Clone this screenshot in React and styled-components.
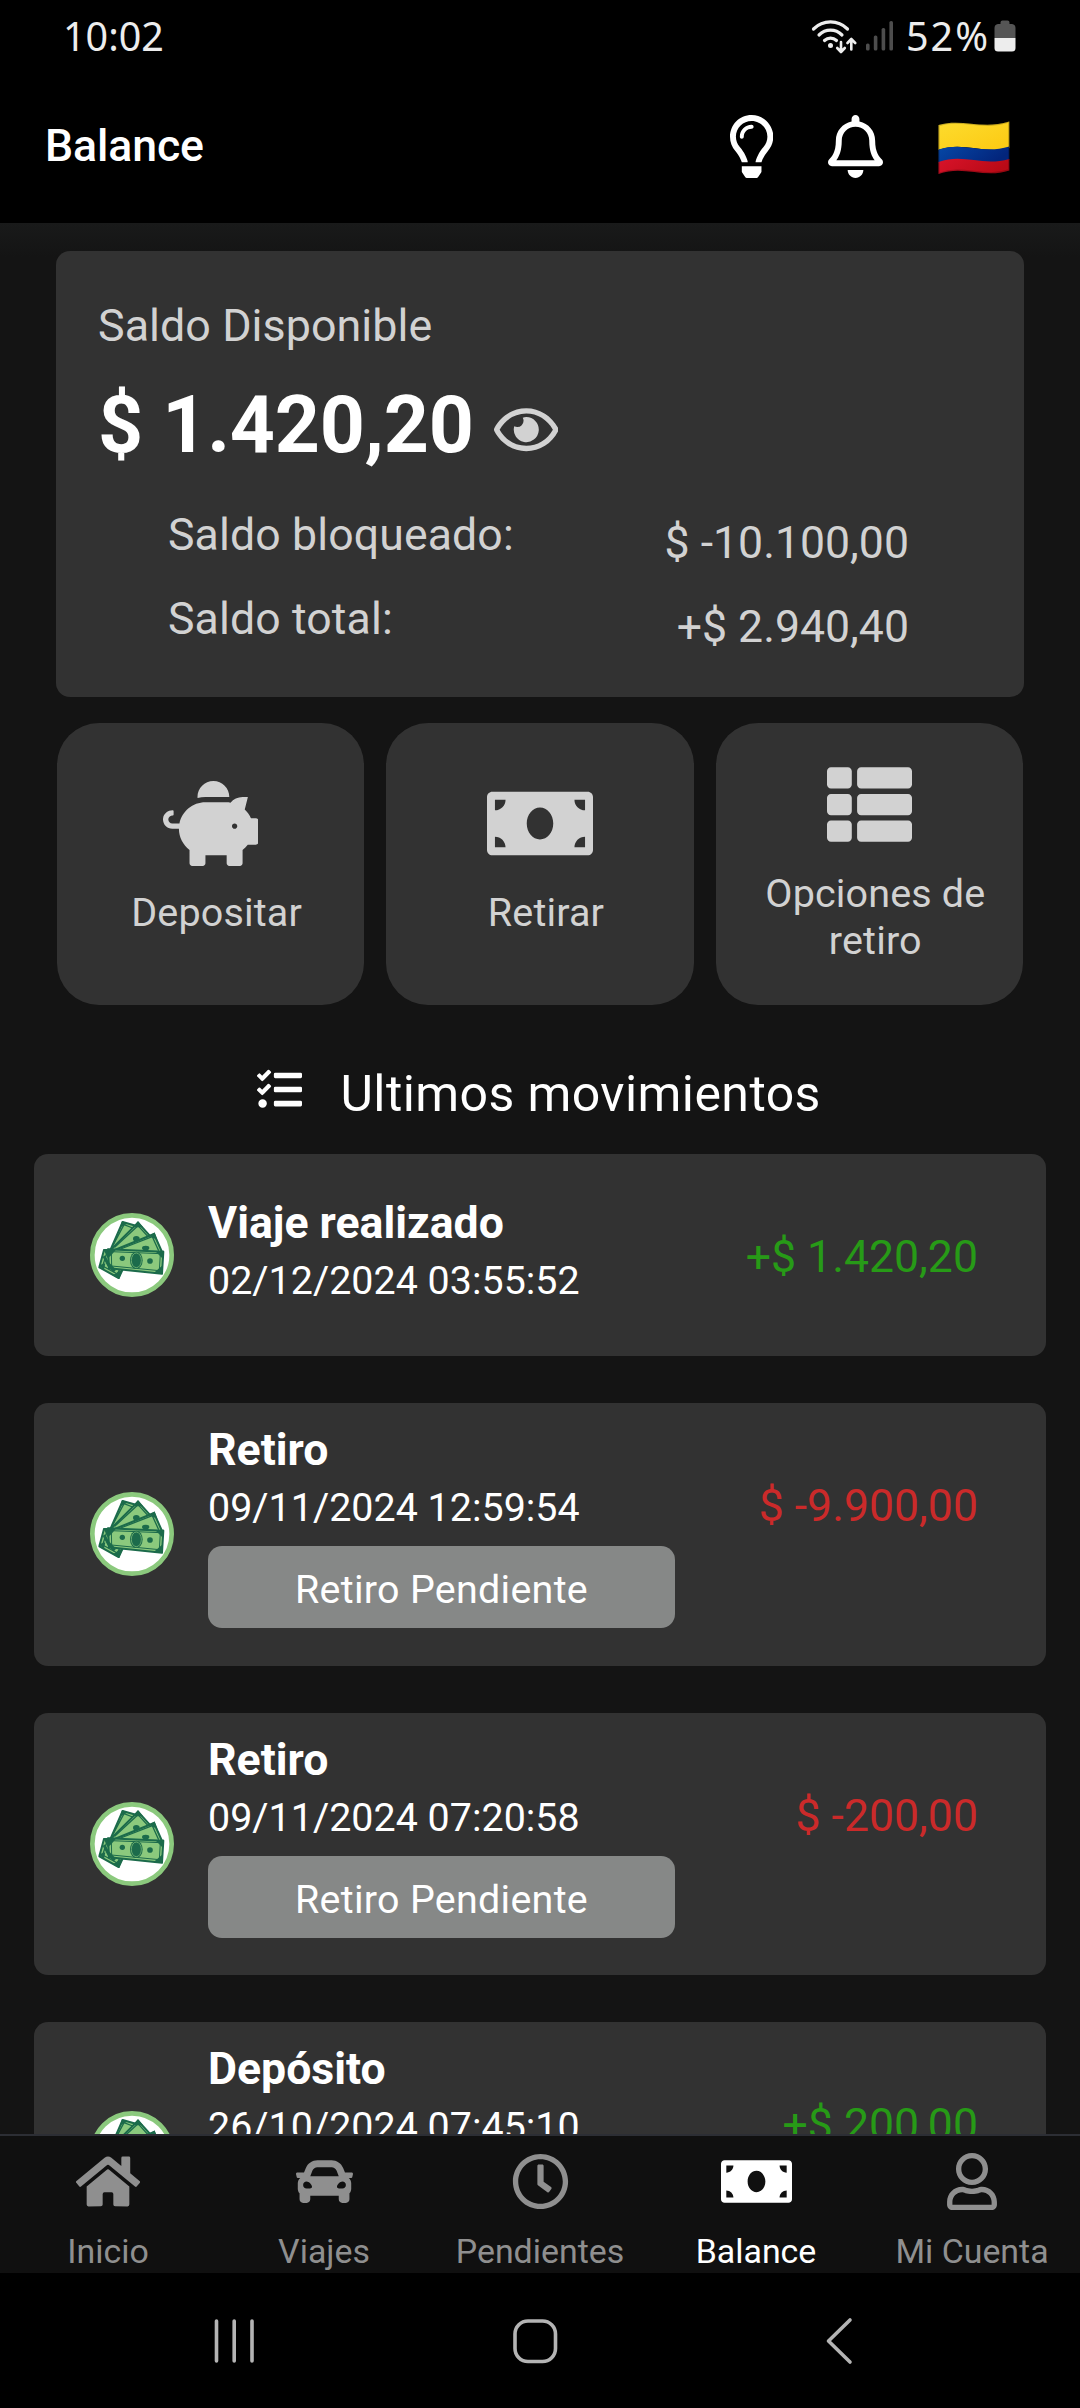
import React from "react";
import styled, { createGlobalStyle } from "styled-components";
import {
  FaRegLightbulb,
  FaRegBell,
  FaRegEye,
  FaPiggyBank,
  FaMoneyBill,
  FaThList,
  FaTasks,
  FaHome,
  FaCar,
  FaRegClock,
  FaRegUser,
} from "react-icons/fa";

const GlobalStyle = createGlobalStyle`
  *, *::before, *::after { box-sizing: border-box; }
  body {
    margin: 0;
    background: #000;
    font-family: Roboto, "Noto Sans", sans-serif;
  }
`;

const Phone = styled.div`
  display: flex;
  flex-direction: column;
  width: 1080px;
  height: 2408px;
  overflow: hidden;
  background: #000;
`;

/* ---------- status bar ---------- */

const StatusBar = styled.div`
  display: flex;
  align-items: center;
  justify-content: space-between;
  height: 72px;
  padding: 0 64px 0 63px;
  color: #ededed;
  font-family: "Noto Sans", Roboto, sans-serif;
  font-size: 39.5px;
  line-height: 72px;
`;

const StatusRight = styled.div`
  display: flex;
  align-items: center;
  height: 72px;
`;

const WifiGlyph = styled.svg`
  width: 46px;
  height: 36px;
  margin-right: 9px;
`;

const SignalGlyph = styled.svg`
  width: 28px;
  height: 30px;
  margin-right: 12px;
`;

const BatteryGlyph = styled.svg`
  width: 22px;
  height: 32px;
  margin-left: 4px;
`;

const Percent = styled.span`
  letter-spacing: 2px;
`;

/* ---------- app header ---------- */

const Header = styled.header`
  display: flex;
  align-items: center;
  height: 151px;
  padding: 0 70px 3px 45px;
  color: #fff;
`;

const HeaderTitle = styled.h1`
  flex: 1;
  margin: 0;
  font-size: 44.6px;
  font-weight: 500;
  line-height: 54px;
  letter-spacing: -0.1px;
`;

const HeaderIcon = styled.span`
  display: flex;
  width: ${(p) => p.$width}px;
  height: 63px;
  margin-right: ${(p) => p.$gap}px;

  svg {
    width: 100%;
    height: 100%;
  }
`;

const Flag = styled.svg`
  width: 72px;
  height: 54px;
  margin-top: 3px;
`;

/* ---------- scroll area ---------- */

const Content = styled.main`
  flex: 1;
  min-height: 0;
  overflow: hidden;
  padding-top: 28px;
  background: linear-gradient(#191a1a 0, #141414 34px);
`;

const BalanceCard = styled.section`
  height: 446px;
  margin: 0 56px;
  padding: 48px 115px 0 42px;
  border-radius: 14px;
  background: #323232;
  color: #d2d2d2;
`;

const CardLabel = styled.div`
  font-size: 44.8px;
  line-height: 54px;
  letter-spacing: 0.06px;
`;

const AmountRow = styled.div`
  display: flex;
  align-items: center;
  height: 92px;
  margin-top: 26px;
`;

const Amount = styled.span`
  font-size: 78.75px;
  font-weight: 700;
  line-height: 92px;
  letter-spacing: -0.25px;
  color: #fff;
`;

const EyeIcon = styled(FaRegEye)`
  width: 64.5px;
  height: 57.3px;
  margin: 9px 0 0 20px;
`;

const BalanceLines = styled.div`
  margin-top: 41px;
`;

const BalanceLine = styled.div`
  display: flex;
  justify-content: space-between;
  height: 84px;
  padding-left: 70px;
  font-size: 44.6px;
  line-height: 54px;
`;

const LineLabel = styled.span`
  margin-top: -4px;
  letter-spacing: 0.13px;
`;

const LineValue = styled.span`
  margin-top: 4px;
`;

/* ---------- quick actions ---------- */

const Actions = styled.div`
  display: grid;
  grid-template-columns: repeat(3, 1fr);
  gap: 22px;
  margin: 26px 57px 0;
`;

const ActionButton = styled.div`
  display: flex;
  flex-direction: column;
  align-items: center;
  justify-content: center;
  height: 282px;
  padding-bottom: 2px;
  border-radius: 42px;
  background: #323232;
  color: #d2d2d2;

  svg {
    width: ${(p) => p.$iconWidth}px;
    height: 85px;
  }
`;

const ActionLabel = styled.span`
  width: 240px;
  min-height: 56px;
  margin: 23px 0 0 12px;
  font-size: 39.5px;
  line-height: 47px;
  letter-spacing: 0.15px;
  text-align: center;
`;

/* ---------- movements ---------- */

const SectionTitle = styled.h2`
  display: flex;
  align-items: center;
  height: 60px;
  margin: 59px 0 0 257px;
  color: #fff;
  font-size: 50px;
  font-weight: 400;
  line-height: 60px;
  letter-spacing: 0.42px;

  svg {
    width: 45px;
    height: 45px;
    margin: -10px 38.5px 0 0;
  }
`;

const Movements = styled.div`
  display: flex;
  flex-direction: column;
  gap: 47px;
  margin: 30px 34px 0;
`;

const MovementCard = styled.article`
  display: flex;
  flex-shrink: 0;
  height: ${(p) => (p.$tall ? 262.5 : 202)}px;
  padding: 0 68px 0 56px;
  border-radius: 14px;
  background: #323232;
  color: #fff;
`;

const CashBadge = styled.svg`
  flex: none;
  align-self: center;
  width: 84px;
  height: 84px;
`;

const MovementBody = styled.div`
  flex: 1;
  padding-top: ${(p) => (p.$tall ? 18 : 40)}px;
  padding-left: 34px;
`;

const MovementTitle = styled.div`
  font-size: 44.6px;
  font-weight: 700;
  line-height: 58px;
`;

const MovementDate = styled.div`
  font-size: 39.4px;
  line-height: 57px;
  letter-spacing: 0.02px;
`;

const StatusPill = styled.div`
  width: 467px;
  height: 82px;
  margin-top: 10px;
  border-radius: 14px;
  background: #868887;
  font-size: 39.4px;
  line-height: 87px;
  letter-spacing: 0.3px;
  text-align: center;
`;

const MovementAmount = styled.div`
  padding-top: 75px;
  font-size: 44.6px;
  line-height: 56px;
  color: ${(p) => (p.$negative ? "#cb2a2a" : "#279a17")};
`;

/* ---------- tab bar ---------- */

const TabBar = styled.nav`
  display: grid;
  grid-template-columns: repeat(5, 1fr);
  height: 139px;
  border-top: 2px solid #2c2e34;
  background: #101010;
`;

const Tab = styled.div`
  display: flex;
  flex-direction: column;
  align-items: center;
  padding-top: 17px;
  color: ${(p) => (p.$active ? "#fff" : "#8f8f8f")};
  font-size: 33.9px;
  line-height: 40px;
  white-space: nowrap;

  svg {
    width: ${(p) => p.$iconWidth}px;
    height: 57px;
    margin-bottom: 22px;
  }
`;

/* ---------- system navigation ---------- */

const SystemNav = styled.div`
  display: flex;
  align-items: center;
  justify-content: space-between;
  height: 135px;
  padding: 0 226px 0 213px;
`;

const NavGlyph = styled.svg`
  width: ${(p) => p.$width}px;
  height: 50px;
  margin-right: ${(p) => p.$shift || 0}px;
  fill: none;
  stroke: #b4b4b4;
  stroke-width: 3.6;
  stroke-linecap: round;
  stroke-linejoin: round;
`;

function Wifi() {
  return (
    <WifiGlyph viewBox="0 0 46 36" fill="none" stroke="#ededed" strokeLinecap="round">
      <path d="M2.5 11 C12 1.6 27 1.6 36.5 11" strokeWidth="3.2" />
      <path d="M8 17 C14.5 10.6 24.5 10.6 31 17" strokeWidth="3.2" />
      <path d="M13.5 22.5 C17 19.2 22 19.2 25.5 22.5" strokeWidth="3.2" />
      <circle cx="19.5" cy="27.5" r="2.5" fill="#ededed" stroke="none" />
      <path d="M30 24 V33 M26.2 30 L30 34 L33.8 30" strokeWidth="2.6" strokeLinejoin="round" />
      <path d="M40.3 31.5 V21.5 M36.5 25 L40.3 21 L44.2 25" strokeWidth="2.6" strokeLinejoin="round" />
    </WifiGlyph>
  );
}

function Signal() {
  return (
    <SignalGlyph viewBox="0 0 28 30" fill="#4d4d4d">
      <rect x="0" y="22.5" width="3.6" height="7" rx="1.6" />
      <rect x="7.8" y="14.5" width="3.6" height="15" rx="1.6" />
      <rect x="15.6" y="7" width="3.6" height="22.5" rx="1.6" />
      <rect x="23.4" y="0" width="3.6" height="29.5" rx="1.6" />
    </SignalGlyph>
  );
}

function Battery() {
  return (
    <BatteryGlyph viewBox="0 0 22 32">
      <path
        d="M6.5 4 V2.5 Q6.5 0.5 8.5 0.5 H13.5 Q15.5 0.5 15.5 2.5 V4 H18 Q21.5 4.5 21.5 8 V18 H0.5 V8 Q0.5 4.5 4 4 Z"
        fill="#555"
      />
      <path d="M0.5 18 H21.5 V28 Q21.5 31.5 18 31.5 H4 Q0.5 31.5 0.5 28 Z" fill="#ededed" />
    </BatteryGlyph>
  );
}

function ColombiaFlag() {
  return (
    <Flag viewBox="0 0 72 54">
      <defs>
        <linearGradient id="yellow" x1="0" y1="0" x2="1" y2="1">
          <stop offset="0" stopColor="#fddc2e" />
          <stop offset="1" stopColor="#fcc912" />
        </linearGradient>
        <linearGradient id="blue" x1="0" y1="0" x2="1" y2="0.3">
          <stop offset="0" stopColor="#0647a6" />
          <stop offset="1" stopColor="#03257c" />
        </linearGradient>
        <linearGradient id="red" x1="0" y1="0" x2="1" y2="0.3">
          <stop offset="0" stopColor="#d8132a" />
          <stop offset="1" stopColor="#b90a16" />
        </linearGradient>
      </defs>
      <path d="M0.5 4 C24 -3 44 9 71.3 0.5 V27 C46 34 26 20 0.5 29 Z" fill="url(#yellow)" />
      <path d="M0.5 28.5 C26 20 44 34 71.3 25.5 V39 C46 47 26 33 0.5 41.5 Z" fill="url(#blue)" />
      <path d="M0.5 41 C26 32 44 46 71.3 38 V49.5 C46 58 26 44 0.5 53 Z" fill="url(#red)" />
      <path
        d="M1 4.3 C24 -2.5 44 9.5 70.8 1.2 V49 C46 57.5 26 43.5 1 52.3 Z"
        fill="none"
        stroke="#000"
        strokeOpacity="0.2"
        strokeWidth="1.4"
      />
    </Flag>
  );
}

const DARK = "#1c6b4b";
const GREEN = "#8bc97d";

function Cash() {
  return (
    <CashBadge viewBox="30 39 252 252">
      <circle cx="156" cy="165" r="119" fill="#fff" stroke={GREEN} strokeWidth="14" />
      <g fill={GREEN} stroke={DARK} strokeWidth="6" strokeLinejoin="round">
        <path d="M92 148 L128 66 L170 78 L150 150 Z" />
        <path d="M98 138 L132 74 L158 84" fill="none" strokeWidth="4" />
        <path d="M92 150 L174 68 L214 112 L160 152 Z" />
        <path d="M104 142 L174 77 L204 110" fill="none" strokeWidth="4" />
        <path d="M104 150 L222 102 L246 156 L150 156 Z" />
        <path d="M122 147 L217 110 L236 152" fill="none" strokeWidth="4" />
        <path d="M72 150 L58 202 L116 234 L130 204 L90 150 Z" />
        <path d="M80 160 L68 198 L112 222 L120 206" fill="none" strokeWidth="4" />
        <path d="M72 168 L86 196 L104 214" fill="none" strokeWidth="9" />
        <path d="M84 148 L250 155 L246 221 L87 205 Z" />
        <path d="M94 155 L241 161 L238 212 L95 198 Z" strokeWidth="3" />
      </g>
      <g fill={DARK}>
        <ellipse cx="169" cy="116" rx="10" ry="8" />
        <ellipse cx="197" cy="144" rx="11" ry="7" />
        <path d="M126 63 L142 71 L120 82 Z" />
        <path d="M174 63 L189 82 L159 82 Z" />
        <path d="M224 97 L232 120 L208 108 Z" />
        <path d="M56 196 L76 190 L72 210 Z" />
        <path d="M98 226 L118 237 L127 208 Z" />
        <path d="M70 148 L96 146 L84 176 Z" />
        <path d="M82 146 L108 149 L88 172 Z" />
        <path d="M252 152 L226 154 L249 177 Z" />
        <path d="M249 223 L222 218 L248 196 Z" />
        <path d="M85 207 L86 186 L106 207 Z" />
        <ellipse cx="169" cy="181" rx="19" ry="26" />
        <circle cx="127" cy="175" r="8" />
        <circle cx="210" cy="183" r="8.5" />
      </g>
      <ellipse cx="169" cy="181" rx="15" ry="22" fill="none" stroke={GREEN} strokeWidth="2" />
    </CashBadge>
  );
}

const movements = [
  { title: "Viaje realizado", date: "02/12/2024 03:55:52", amount: "+$ 1.420,20" },
  { title: "Retiro", date: "09/11/2024 12:59:54", amount: "$ -9.900,00", negative: true, status: "Retiro Pendiente" },
  { title: "Retiro", date: "09/11/2024 07:20:58", amount: "$ -200,00", negative: true, status: "Retiro Pendiente" },
  { title: "Depósito", date: "26/10/2024 07:45:10", amount: "+$ 200,00", tall: true },
];

const tabs = [
  { label: "Inicio", Icon: FaHome, width: 64 },
  { label: "Viajes", Icon: FaCar, width: 57 },
  { label: "Pendientes", Icon: FaRegClock, width: 57 },
  { label: "Balance", Icon: FaMoneyBill, width: 71, active: true },
  { label: "Mi Cuenta", Icon: FaRegUser, width: 50 },
];

const actions = [
  { label: "Depositar", Icon: FaPiggyBank, width: 95.5 },
  { label: "Retirar", Icon: FaMoneyBill, width: 106 },
  { label: "Opciones de retiro", Icon: FaThList, width: 85 },
];

export default function App() {
  return (
    <>
      <GlobalStyle />
      <Phone>
        <StatusBar>
          <span>10:02</span>
          <StatusRight>
            <Wifi />
            <Signal />
            <Percent>52%</Percent>
            <Battery />
          </StatusRight>
        </StatusBar>

        <Header>
          <HeaderTitle>Balance</HeaderTitle>
          <HeaderIcon $width={43.3} $gap={55}>
            <FaRegLightbulb />
          </HeaderIcon>
          <HeaderIcon $width={55} $gap={55}>
            <FaRegBell />
          </HeaderIcon>
          <ColombiaFlag />
        </Header>

        <Content>
          <BalanceCard>
            <CardLabel>Saldo Disponible</CardLabel>
            <AmountRow>
              <Amount>$ 1.420,20</Amount>
              <EyeIcon />
            </AmountRow>
            <BalanceLines>
              <BalanceLine>
                <LineLabel>Saldo bloqueado:</LineLabel>
                <LineValue>$ -10.100,00</LineValue>
              </BalanceLine>
              <BalanceLine>
                <LineLabel>Saldo total:</LineLabel>
                <LineValue>+$ 2.940,40</LineValue>
              </BalanceLine>
            </BalanceLines>
          </BalanceCard>

          <Actions>
            {actions.map(({ label, Icon, width }) => (
              <ActionButton key={label} $iconWidth={width}>
                <Icon />
                <ActionLabel>{label}</ActionLabel>
              </ActionButton>
            ))}
          </Actions>

          <SectionTitle>
            <FaTasks />
            Ultimos movimientos
          </SectionTitle>

          <Movements>
            {movements.map((m) => {
              const tall = Boolean(m.status || m.tall);
              return (
                <MovementCard key={m.date} $tall={tall}>
                  <Cash />
                  <MovementBody $tall={tall}>
                    <MovementTitle>{m.title}</MovementTitle>
                    <MovementDate>{m.date}</MovementDate>
                    {m.status && <StatusPill>{m.status}</StatusPill>}
                  </MovementBody>
                  <MovementAmount $negative={m.negative}>{m.amount}</MovementAmount>
                </MovementCard>
              );
            })}
          </Movements>
        </Content>

        <TabBar>
          {tabs.map(({ label, Icon, width, active }) => (
            <Tab key={label} $active={active} $iconWidth={width}>
              <Icon />
              {label}
            </Tab>
          ))}
        </TabBar>

        <SystemNav>
          <NavGlyph $width={42} viewBox="0 0 42 50">
            <path d="M3.5 5 V45 M21.2 5 V45 M39 5 V45" />
          </NavGlyph>
          <NavGlyph $width={50} $shift={9} viewBox="0 0 50 50">
            <rect x="5" y="5" width="40.5" height="40.5" rx="13" />
          </NavGlyph>
          <NavGlyph $width={30} viewBox="0 0 30 50">
            <path d="M26 4 L4.5 25 L26 46" />
          </NavGlyph>
        </SystemNav>
      </Phone>
    </>
  );
}
